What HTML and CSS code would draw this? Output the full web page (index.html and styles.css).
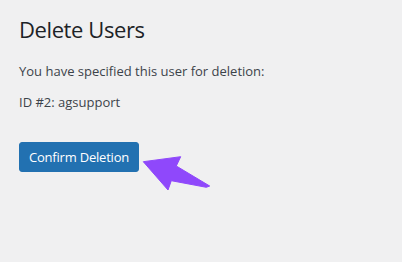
FILE: index.html
```html
<!DOCTYPE html>
<html lang="en">
<head>
    <meta charset="UTF-8">
    <meta name="viewport" content="width=device-width, initial-scale=1.0">
    <title>Delete Users</title>
    <link rel="stylesheet" href="styles.css">
</head>
<body>
    <div class="wrap">
        <h1>Delete Users</h1>
        <p>You have specified this user for deletion:</p>
        <ul class="user-list">
            <li>ID #2: agsupport</li>
        </ul>
        <div class="submit">
            <button type="button" class="button-primary">Confirm Deletion</button>
            <svg class="pointer" width="72" height="40" viewBox="0 0 72 40">
                <polygon points="5.3,11.7 42.7,6.7 38.3,16 71.7,36 68.3,37.3 33.3,30.7 30,40" fill="#8f48fb" stroke="#8f48fb" stroke-width="1" stroke-linejoin="round"/>
            </svg>
        </div>
    </div>
</body>
</html>
```

FILE: styles.css
```css
body {
    margin: 0;
    background-color: #f0f0f1;
    color: #3c434a;
    font-family: "Open Sans", sans-serif;
    font-size: 13px;
    line-height: 1.4;
}
.wrap {
    padding: 14px 19px 0;
}
h1 {
    margin: 0;
    padding: 0;
    font-size: 22px;
    letter-spacing: -0.4px;
    font-weight: 400;
    line-height: 30px;
    color: #1d2327;
}
p {
    margin: 18px 0 13px;
}
.user-list {
    list-style: none;
    margin: 0;
    padding: 0;
}
.submit {
    display: flex;
    align-items: flex-start;
    margin-top: 31px;
}
.button-primary {
    background: #2271b1;
    border: 1px solid #2271b1;
    border-radius: 3px;
    color: #fff;
    font-family: inherit;
    font-size: 13px;
    letter-spacing: -0.2px;
    width: 120px;
    height: 30px;
    padding: 0;
    cursor: pointer;
}
.pointer {
    margin: 8px 0 0 -1px;
}
```
